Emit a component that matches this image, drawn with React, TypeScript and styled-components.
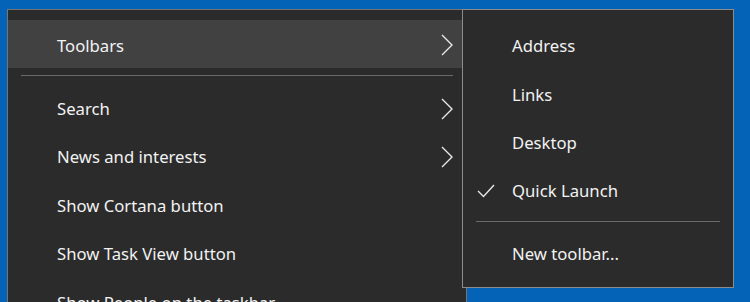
import React from 'react';
import styled, { createGlobalStyle } from 'styled-components';

const GlobalStyle = createGlobalStyle`
  html, body {
    margin: 0;
    padding: 0;
    background: #0563b7;
    overflow: hidden;
  }
  * {
    box-sizing: border-box;
  }
`;

const Desktop = styled.div`
  position: relative;
  width: 750px;
  height: 302px;
  padding: 9px 0 0 7px;
  font-family: 'Noto Sans', 'Open Sans', sans-serif;
  font-size: 16.7px;
  color: #f2f2f2;
`;

const Menu = styled.div`
  width: 460px;
  background: #2b2b2b;
  border: 1px solid #767676;
  border-bottom: none;
  padding-top: 10px;
`;

interface RowProps {
  active?: boolean;
}

const Row = styled.div<RowProps>`
  display: flex;
  align-items: center;
  height: 48.4px;
  padding: 2px 13px 0 49px;
  background: ${props => (props.active ? '#414141' : 'transparent')};
`;

const Label = styled.span`
  flex: 1;
  white-space: nowrap;
`;

const Separator = styled.div`
  height: 15px;
  display: flex;
  align-items: center;
  padding: 0 13px;

  &::after {
    content: '';
    flex: 1;
    height: 1px;
    background: #6a6a6a;
  }
`;

const Flyout = styled.div`
  position: absolute;
  left: 462px;
  top: 9px;
  width: 272px;
  height: 279px;
  background: #2b2b2b;
  border: 1px solid #8c8c8c;
  padding-top: 11px;
`;

const SubRow = styled.div`
  display: flex;
  align-items: center;
  height: 48.4px;
  padding-top: 1px;
`;

const CheckSlot = styled.span`
  width: 49px;
  display: flex;
  justify-content: flex-end;
  padding-right: 17px;
`;

const SubSeparator = styled.div`
  height: 14px;
  display: flex;
  align-items: center;
  padding: 0 13px 0 13px;

  &::after {
    content: '';
    flex: 1;
    height: 1px;
    background: #6a6a6a;
  }
`;

const Chevron = () => (
  <svg width="12" height="22" viewBox="0 0 12 22" fill="none">
    <path d="M1 1 L11 11 L1 21" stroke="#e8e8e8" strokeWidth="1.4" />
  </svg>
);

const Check = () => (
  <svg width="18" height="14" viewBox="0 0 18 14" fill="none">
    <path d="M1 7 L6.5 12.5 L17 1" stroke="#e8e8e8" strokeWidth="1.4" />
  </svg>
);

const mainItems = [
  { label: 'Search', sub: true },
  { label: 'News and interests', sub: true },
  { label: 'Show Cortana button' },
  { label: 'Show Task View button' },
  { label: 'Show People on the taskbar' },
];

const toolbars = [
  { label: 'Address' },
  { label: 'Links' },
  { label: 'Desktop' },
  { label: 'Quick Launch', checked: true },
];

export default function App(): JSX.Element {
  return (
    <>
      <GlobalStyle />
      <Desktop>
        <Menu>
          <Row active>
            <Label>Toolbars</Label>
            <Chevron />
          </Row>
          <Separator />
          {mainItems.map(item => (
            <Row key={item.label}>
              <Label>{item.label}</Label>
              {item.sub && <Chevron />}
            </Row>
          ))}
        </Menu>

        <Flyout>
          {toolbars.map(item => (
            <SubRow key={item.label}>
              <CheckSlot>{item.checked && <Check />}</CheckSlot>
              <Label>{item.label}</Label>
            </SubRow>
          ))}
          <SubSeparator />
          <SubRow>
            <CheckSlot />
            <Label>New toolbar...</Label>
          </SubRow>
        </Flyout>
      </Desktop>
    </>
  );
}
